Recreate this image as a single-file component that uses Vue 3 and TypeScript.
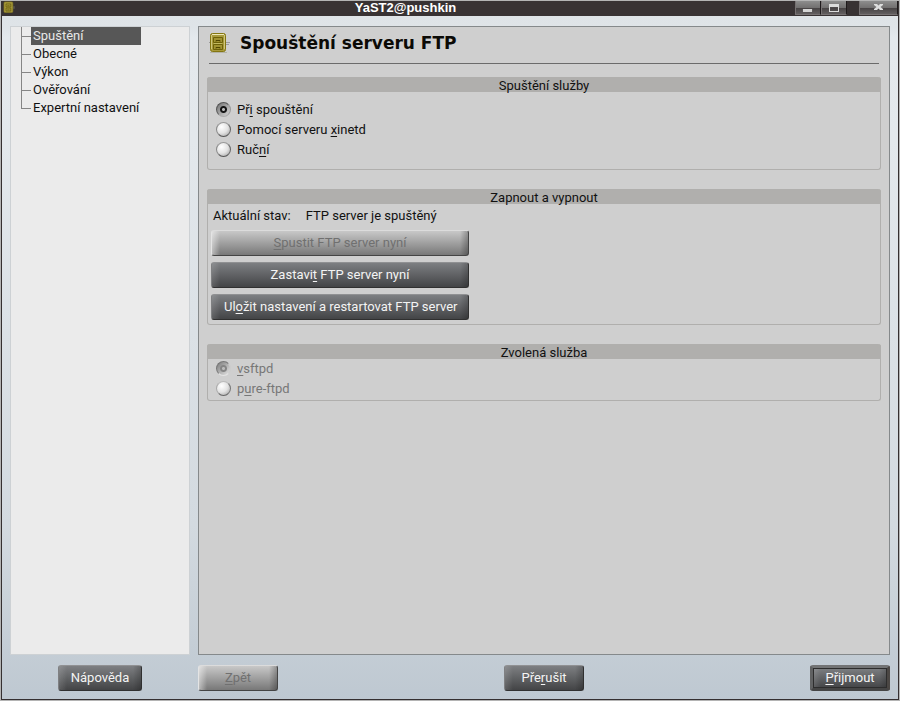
<script setup lang="ts">
import { ref } from 'vue'

interface Choice {
  id: string
  before: string
  key: string
  after: string
}

const pages: string[] = ['Spuštění', 'Obecné', 'Výkon', 'Ověřování', 'Expertní nastavení']
const currentPage = ref<string>('Spuštění')

const startModes: Choice[] = [
  { id: 'boot', before: 'Př', key: 'i', after: ' spouštění' },
  { id: 'xinetd', before: 'Pomocí serveru ', key: 'x', after: 'inetd' },
  { id: 'manual', before: 'Ruč', key: 'n', after: 'í' },
]
const startMode = ref<string>('boot')

const daemons: Choice[] = [
  { id: 'vsftpd', before: '', key: 'v', after: 'sftpd' },
  { id: 'pureftpd', before: 'p', key: 'u', after: 're-ftpd' },
]
const daemon = ref<string>('vsftpd')
</script>

<template>
  <div class="window">
    <header class="titlebar">
      <svg class="title-icon" viewBox="0 0 22 22" aria-hidden="true">
        <path d="M17 10h4M17 12h4" stroke="#777" />
        <rect x="2.500" y="1.500" width="15" height="18" rx="2" fill="#a39539" stroke="#8a7c20" />
        <path d="M6 5h8v5H6zM6 12h8v5H6zM8 8h4M8 15h4" fill="none" stroke="#5b5000" />
      </svg>
      <h1 class="caption">YaST2@pushkin</h1>
      <div class="controls">
        <button type="button" class="control" aria-label="Minimalizovat">
          <svg viewBox="0 0 14 12" width="14" height="12"><rect x="1" y="7" width="11" height="4" fill="#5a5657" /><rect x="2" y="7" width="9" height="3" fill="#d5d5d5" /></svg>
        </button>
        <button type="button" class="control" aria-label="Maximalizovat">
          <svg viewBox="0 0 14 12" width="14" height="12"><path fill="#dcdcdc" fill-rule="evenodd" d="M2 2h10v8H2zM3 5v4h8V5z" /><rect x="3.500" y="5.500" width="7" height="3" fill="none" stroke="#4e4a4b" /></svg>
        </button>
        <button type="button" class="control close" aria-label="Zavřít">
          <svg viewBox="0 0 14 12" width="14" height="12"><path d="M2 2h3l1.500 1.500L8 2h3v1L8.500 5 11 7v1H8L6.500 6.500 5 8H2V7l2.500-2L2 3z" fill="#dedede" /></svg>
        </button>
      </div>
    </header>

    <div class="body">
      <nav class="sidebar" aria-label="Nastavení serveru">
        <ul class="tree">
          <li v-for="page in pages" :key="page" class="branch">
            <a
              href="#"
              class="leaf"
              :class="{ selected: page === currentPage }"
              @click.prevent="currentPage = page"
            >{{ page }}</a>
          </li>
        </ul>
      </nav>

      <main class="panel">
        <div class="heading">
          <svg class="heading-icon" viewBox="0 0 22 22" width="22" height="22" aria-hidden="true">
            <path d="M17 10.500h4M17 12.500h3M0 10.500h2" stroke="#9b9b9b" />
            <path d="M1 20.500h17" stroke="#b3b3a8" />
            <rect x="1.500" y="1.500" width="15" height="18" rx="2" fill="#a89a3c" stroke="#857711" />
            <path d="M3 2.500h12" stroke="#eee9b8" />
            <path d="M2.500 3v14M15.500 3v14" stroke="#cfc77d" />
            <path d="M4.500 5.500h9v5h-9zM4.500 12.500h9v5h-9z" fill="#a19331" stroke="#6d6108" />
            <path d="M7 9.500v-1h4v1M7 16.500v-1h4v1" fill="none" stroke="#504600" />
            <path d="M5 11.500h8" stroke="#c4bb62" />
          </svg>
          <h2 class="page-title">Spouštění serveru FTP</h2>
        </div>

        <section class="group" role="radiogroup" aria-labelledby="start-title">
          <h3 id="start-title" class="group-title">Spuštění služby</h3>
          <div class="group-body roomy">
            <div v-for="mode in startModes" :key="mode.id" class="option">
              <input :id="mode.id" v-model="startMode" class="radio" type="radio" name="start" :value="mode.id" />
              <label :for="mode.id">{{ mode.before }}<u>{{ mode.key }}</u>{{ mode.after }}</label>
            </div>
          </div>
        </section>

        <section class="group" aria-labelledby="state-title">
          <h3 id="state-title" class="group-title">Zapnout a vypnout</h3>
          <div class="group-body actions">
            <p class="status"><span>Aktuální stav:</span><span>FTP server je spuštěný</span></p>
            <button type="button" class="button" disabled><u>S</u>pustit FTP server nyní</button>
            <button type="button" class="button">Zastavi<u>t</u> FTP server nyní</button>
            <button type="button" class="button">Ul<u>o</u>žit nastavení a restartovat FTP server</button>
          </div>
        </section>

        <section class="group" role="radiogroup" aria-labelledby="daemon-title">
          <h3 id="daemon-title" class="group-title">Zvolená služba</h3>
          <div class="group-body">
            <div v-for="item in daemons" :key="item.id" class="option muted">
              <input :id="item.id" v-model="daemon" class="radio" type="radio" name="daemon" :value="item.id" disabled />
              <label :for="item.id">{{ item.before }}<u>{{ item.key }}</u>{{ item.after }}</label>
            </div>
          </div>
        </section>
      </main>
    </div>

    <footer class="footer">
      <div class="help">
        <button type="button" class="button">Nápověda</button>
      </div>
      <div class="steps">
        <button type="button" class="button" disabled><u>Z</u>pět</button>
        <button type="button" class="button">Pře<u>r</u>ušit</button>
        <button type="button" class="button default"><u>P</u>řijmout</button>
      </div>
    </footer>
  </div>
</template>

<style>
body {
  background: #b9bcbb;
}
</style>

<style scoped>
.window {
  box-sizing: border-box;
  min-height: 100vh;
  display: flex;
  flex-direction: column;
  border: 1px solid #b4b4b4;
  background: linear-gradient(#dde2e5, #dfe4e8 26px, #e4e9ed 36px, #e3e8ec 20%, #d3dae0 75%, #bec8d1);
  color: #111;
  font: 13px/18px Roboto, "Liberation Sans", sans-serif;
}

u {
  text-underline-offset: 2px;
  text-decoration-thickness: 1px;
  text-decoration-skip-ink: none;
}

.titlebar {
  display: flex;
  height: 15px;
  background: #383233;
}

.title-icon {
  width: 14px;
  height: 13px;
  margin-left: 1px;
}

.caption {
  flex: 1;
  margin: 0;
  color: #fff;
  font: bold 13px/13px "Liberation Sans", sans-serif;
  text-align: center;
}

.controls {
  display: flex;
}

.control {
  box-sizing: border-box;
  width: 26px;
  height: 14px;
  padding: 0;
  display: flex;
  align-items: center;
  justify-content: center;
  border: 1px solid #777273;
  border-top: 0;
  border-right-color: #1e1a1b;
  background: linear-gradient(#8d8d8d, #737171 50%, #454142 51%, #625e5f);
}

.close {
  width: 39px;
  margin: 0 1px 0 12px;
}

.body {
  flex: 1;
  display: grid;
  grid-template-columns: 180px 1fr;
  gap: 8px;
  padding: 10px 8px 0;
  border: solid #353031;
  border-width: 0 1px;
}

.sidebar {
  border: 1px solid #cdd1d4;
  background: #ebebeb;
}

.tree {
  margin: 0;
  padding: 0 0 0 10px;
  list-style: none;
}

.branch {
  display: flex;
  align-items: center;
  height: 18px;
  background:
    linear-gradient(#858585, #858585) 0 0 / 1px 100% no-repeat,
    linear-gradient(#858585, #858585) 0 9px / 10px 1px no-repeat;
}

.branch:last-child {
  background:
    linear-gradient(#858585, #858585) 0 0 / 1px 10px no-repeat,
    linear-gradient(#858585, #858585) 0 9px / 10px 1px no-repeat;
}

.leaf {
  width: 108px;
  margin-left: 10px;
  padding-left: 2px;
  color: #111;
  text-decoration: none;
  white-space: nowrap;
}

.selected {
  background: #575757;
  color: #e8e8e8;
}

.panel {
  display: flex;
  flex-direction: column;
  gap: 19px;
  padding: 0 8px;
  border: 1px solid #85898b;
  background: #cfcfcf;
}

.heading {
  display: flex;
  align-items: center;
  gap: 9px;
  height: 36px;
  margin: 0 2px -6px;
  border-bottom: 1px solid #6b6b6b;
}

.page-title {
  margin: 0 0 4px;
  color: #0b0a06;
  font: bold 17px/24px "DejaVu Sans", sans-serif;
}

.heading-icon {
  margin-bottom: 5px;
}

.group {
  border: 1px solid #b0afad;
  border-top: 0;
  border-radius: 3px;
}

.group-title {
  height: 15px;
  margin: 0 -1px;
  border-radius: 3px 3px 0 0;
  background: #b0afad;
  font-weight: normal;
  font-size: 13px;
  line-height: 17px;
  text-align: center;
}

.group-body {
  padding: 0 8px 1px;
}

.roomy {
  padding: 8px 8px 9px;
}

.option {
  display: flex;
  align-items: center;
  gap: 6px;
  height: 20px;
}

.muted {
  color: #777;
}

.radio {
  appearance: none;
  box-sizing: border-box;
  width: 15px;
  height: 15px;
  margin: 0 0 1px;
  border: 1px solid;
  border-color: #999 #666 #555 #888;
  border-radius: 50%;
  background: radial-gradient(circle at 35% 30%, #fff, #e3e3e3 50%, #999);
}

.radio:disabled {
  border-color: #bbb #777 #666 #aaa;
}

.radio:checked {
  border-color: #555 #999 #aaa #555;
  background:
    radial-gradient(circle, #bbb 1px, #151515 2px, #151515 3px, transparent 4px),
    linear-gradient(135deg, #6b6b6b, #e0e0e0) border-box;
}

.radio:checked:disabled {
  border-color: #777 #ccc #e4e4e4 #777;
  background:
    radial-gradient(circle, #bbb 1px, #858585 2px, #858585 3px, transparent 4px),
    linear-gradient(135deg, #737373, #eee) border-box;
}

.actions {
  display: flex;
  flex-direction: column;
  align-items: flex-start;
  gap: 6px;
  padding: 3px 3px 4px;
}

.actions .button {
  width: 258px;
}

.status {
  display: flex;
  gap: 15px;
  margin: 0 2px -1px;
}

.button {
  box-sizing: border-box;
  min-width: 80px;
  height: 26px;
  padding: 0 12px;
  border: 1px solid;
  border-color: #909193 #303030 #303030 #7f8082;
  border-radius: 3px;
  background:
    linear-gradient(90deg, #ffffff22, transparent 8px, transparent calc(100% - 8px), #00000033),
    linear-gradient(#7d7f82, #434446);
  color: #f4f4f4;
  font: inherit;
  white-space: nowrap;
}

.button:disabled {
  border-color: #dcdcdc #444 #444 #e4e4e4;
  background:
    linear-gradient(90deg, #ffffff77, transparent 8px, transparent calc(100% - 8px), #00000044),
    linear-gradient(#c8c8c8, #787878);
  color: #707070;
}

.default {
  border-width: 3px;
  border-color: #737475 #4b4744 #454545 #606162;
  box-shadow: inset 0 0 0 1px #2d2d2d;
  padding: 0 10px;
}

.footer {
  display: grid;
  grid-template-columns: 180px 1fr;
  gap: 8px;
  padding: 10px 8px 8px;
  border: solid #353031;
  border-width: 0 1px 1px;
}

.help {
  display: flex;
  justify-content: center;
}

.steps {
  display: flex;
  justify-content: space-between;
}
</style>
